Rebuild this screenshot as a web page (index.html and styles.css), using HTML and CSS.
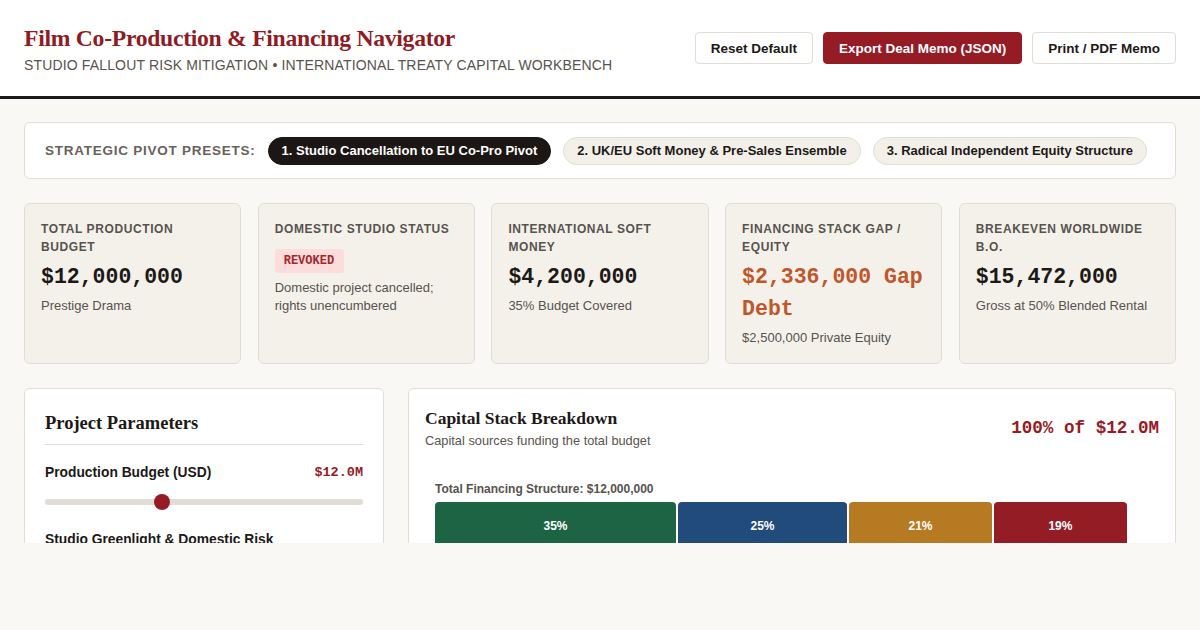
FILE: index.html
```html
<!doctype html>
<html lang="en">
	<head>
		<meta charset="utf-8">
		<title>Film Co-Production &amp; Financing Navigator</title>
		<link rel="stylesheet" href="styles.css">
	</head>
	<body>
		<div class="page">
			<header class="topbar">
				<div class="brand">
					<h1>Film Co-Production &amp; Financing Navigator</h1>
					<p class="tagline">Studio Fallout Risk Mitigation &bull; International Treaty Capital Workbench</p>
				</div>
				<div class="actions">
					<button class="btn">Reset Default</button>
					<button class="btn btn-primary">Export Deal Memo (JSON)</button>
					<button class="btn">Print / PDF Memo</button>
				</div>
			</header>

			<main class="content">
				<section class="presets">
					<span class="presets-label">Strategic Pivot Presets:</span>
					<button class="pill active">1. Studio Cancellation to EU Co-Pro Pivot</button>
					<button class="pill">2. UK/EU Soft Money &amp; Pre-Sales Ensemble</button>
					<button class="pill">3. Radical Independent Equity Structure</button>
				</section>

				<section class="stats">
					<div class="stat">
						<div class="stat-label">Total Production Budget</div>
						<div class="stat-value">$12,000,000</div>
						<div class="stat-sub">Prestige Drama</div>
					</div>
					<div class="stat">
						<div class="stat-label">Domestic Studio Status</div>
						<div class="stat-value"><span class="badge">REVOKED</span></div>
						<div class="stat-sub">Domestic project cancelled; rights unencumbered</div>
					</div>
					<div class="stat">
						<div class="stat-label">International Soft Money</div>
						<div class="stat-value">$4,200,000</div>
						<div class="stat-sub">35% Budget Covered</div>
					</div>
					<div class="stat">
						<div class="stat-label">Financing Stack Gap / Equity</div>
						<div class="stat-value warn">$2,336,000 Gap Debt</div>
						<div class="stat-sub">$2,500,000 Private Equity</div>
					</div>
					<div class="stat">
						<div class="stat-label">Breakeven Worldwide B.O.</div>
						<div class="stat-value">$15,472,000</div>
						<div class="stat-sub">Gross at 50% Blended Rental</div>
					</div>
				</section>

				<section class="workspace">
					<div class="panel params">
						<h2>Project Parameters</h2>
						<div class="field">
							<div class="field-head">
								<label>Production Budget (USD)</label>
								<span class="field-value">$12.0M</span>
							</div>
							<div class="slider">
								<span class="slider-thumb" style="left: 36.8%"></span>
							</div>
						</div>
						<div class="field">
							<div class="field-head">
								<label>Studio Greenlight &amp; Domestic Risk</label>
							</div>
						</div>
					</div>

					<div class="panel stack">
						<div class="stack-head">
							<div>
								<h2>Capital Stack Breakdown</h2>
								<p class="muted">Capital sources funding the total budget</p>
							</div>
							<div class="stack-total">100% of $12.0M</div>
						</div>
						<div class="stack-chart">
							<div class="chart-label">Total Financing Structure: $12,000,000</div>
							<div class="bar">
								<div class="seg seg-soft" style="flex-basis: 34.83%">35%</div>
								<div class="seg seg-presale" style="flex-basis: 24.42%">25%</div>
								<div class="seg seg-gap" style="flex-basis: 20.66%">21%</div>
								<div class="seg seg-equity" style="flex-basis: 19.22%">19%</div>
							</div>
						</div>
					</div>
				</section>
			</main>
		</div>
	</body>
</html>
```

FILE: styles.css
```css
* {
	box-sizing: border-box;
}

body {
	margin: 0;
	background: #f9f8f5;
	color: #1c1917;
	font-family: "Liberation Sans", Arial, sans-serif;
}

.page {
	height: 543px;
	overflow: hidden;
}

/* header */
.topbar {
	display: flex;
	justify-content: space-between;
	align-items: center;
	height: 99px;
	padding: 0 24px;
	background: #fff;
	border-bottom: 3px solid #1a1a1a;
}

.brand {
	padding-top: 2px;
}

h1 {
	margin: 0 0 5px;
	font-family: "Liberation Serif", "Times New Roman", serif;
	font-size: 23.7px;
	letter-spacing: -0.3px;
	color: #8f1b24;
}

.tagline {
	margin: 0;
	font-size: 14px;
	letter-spacing: 0.15px;
	text-transform: uppercase;
	color: #57534e;
}

.actions {
	display: flex;
	gap: 10px;
}

.btn {
	height: 32px;
	padding: 0 15px;
	font-family: inherit;
	font-size: 13.5px;
	font-weight: bold;
	color: #1c1917;
	background: #fff;
	border: 1px solid #e2ddd4;
	border-radius: 4px;
}

.btn-primary {
	background: #951b25;
	border-color: #951b25;
	color: #fff;
}

.content {
	padding: 23px 24px 24px;
}

/* presets */
.presets {
	display: flex;
	align-items: center;
	gap: 12px;
	height: 57px;
	padding: 0 20px;
	background: #fff;
	border: 1px solid #e2ddd4;
	border-radius: 6px;
}

.presets-label {
	font-size: 13.5px;
	font-weight: bold;
	letter-spacing: 0.75px;
	text-transform: uppercase;
	color: #69625b;
}

.pill {
	height: 28px;
	padding: 0 13px;
	font-family: inherit;
	font-size: 13px;
	font-weight: bold;
	color: #1c1917;
	background: #f3f0ea;
	border: 1px solid #e2ddd4;
	border-radius: 14px;
}

.pill.active {
	background: #1c1614;
	border-color: #1c1614;
	color: #fff;
}

/* stat cards */
.stats {
	display: grid;
	grid-template-columns: repeat(5, 1fr);
	gap: 16.5px;
	margin-top: 24px;
}

.stat {
	min-height: 160px;
	padding: 16px;
	background: #f4f1eb;
	border: 1px solid #e2ddd4;
	border-radius: 6px;
}

.stat-label {
	font-size: 12px;
	line-height: 18px;
	font-weight: bold;
	letter-spacing: 0.6px;
	text-transform: uppercase;
	color: #57534e;
}

.stat-value {
	margin-top: 5px;
	font-family: "Liberation Mono", "Courier New", monospace;
	font-size: 21.5px;
	line-height: 32px;
	font-weight: bold;
	color: #1c1917;
}

.stat-value.warn {
	color: #c0562a;
}

.stat-sub {
	margin-top: 4px;
	font-size: 13px;
	line-height: 18px;
	color: #57534e;
}

.badge {
	display: inline-block;
	padding: 0 10px 0 9px;
	line-height: 24px;
	font-size: 12px;
	vertical-align: 1px;
	color: #a3262b;
	background: #fddcdc;
	border-radius: 3px;
}

/* bottom panels */
.workspace {
	display: grid;
	grid-template-columns: 360px 1fr;
	gap: 24px;
	margin-top: 24px;
}

.panel {
	min-height: 300px;
	background: #fff;
	border: 1px solid #e2ddd4;
	border-radius: 6px;
}

h2 {
	margin: 0;
	font-family: "Liberation Serif", "Times New Roman", serif;
	font-weight: bold;
	color: #1c1917;
}

.params {
	padding: 20px;
}

.params h2 {
	font-size: 18.5px;
	padding-top: 4px;
	padding-bottom: 10px;
	border-bottom: 1px solid #e2ddd4;
}

.field {
	margin-top: 20px;
}

.field + .field {
	margin-top: 27px;
}

.field-head {
	display: flex;
	justify-content: space-between;
	align-items: center;
}

.field-head label {
	font-size: 13.8px;
	font-weight: bold;
}

.field-value {
	font-family: "Liberation Mono", "Courier New", monospace;
	font-size: 13.5px;
	font-weight: bold;
	color: #951b25;
}

.slider {
	position: relative;
	height: 6px;
	margin-top: 19px;
	background: #e2ddd4;
	border-radius: 3px;
}

.slider-thumb {
	position: absolute;
	top: -5px;
	width: 16px;
	height: 16px;
	margin-left: -8px;
	background: #951b25;
	border-radius: 50%;
}

.stack {
	padding: 17px 16px 16px;
}

.stack-head {
	display: flex;
	justify-content: space-between;
	align-items: center;
}

.stack h2 {
	font-size: 17.5px;
	margin-top: 2px;
}

.muted {
	margin: 4px 0 0;
	font-size: 12.8px;
	color: #57534e;
}

.stack-total {
	font-family: "Liberation Mono", "Courier New", monospace;
	font-size: 17.6px;
	font-weight: bold;
	color: #951b25;
	padding-top: 2px;
}

.stack-chart {
	margin-top: 34px;
	padding: 0 32px 0 10px;
}

.chart-label {
	font-size: 12px;
	font-weight: bold;
	color: #57534e;
}

.bar {
	display: flex;
	gap: 2px;
	height: 48px;
	margin-top: 6px;
}

.seg {
	display: flex;
	justify-content: center;
	padding-top: 17px;
	font-size: 12px;
	font-weight: bold;
	color: #fff;
	border-radius: 4px 4px 0 0;
}

.seg-soft { background: #1d6444; }
.seg-presale { background: #204b7a; }
.seg-gap { background: #b57a22; }
.seg-equity { background: #931c25; }
```
